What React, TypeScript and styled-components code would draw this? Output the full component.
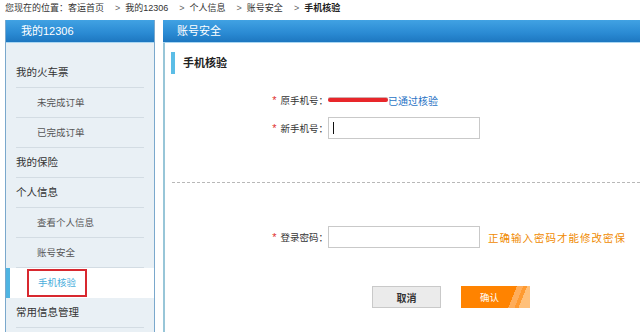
import styled, { createGlobalStyle } from 'styled-components'

const Global = createGlobalStyle`
  html, body {
    margin: 0;
    padding: 0;
    background: #fff;
    overflow: hidden;
  }
  body {
    font-family: 'Liberation Sans', 'Noto Sans CJK SC', sans-serif;
    color: #333;
  }
`

const crumbs = ['我的12306', '个人信息', '账号安全']

type NavItem = { text: string; sub?: boolean; active?: boolean }

const nav: NavItem[] = [
  { text: '我的火车票' },
  { text: '未完成订单', sub: true },
  { text: '已完成订单', sub: true },
  { text: '我的保险' },
  { text: '个人信息' },
  { text: '查看个人信息', sub: true },
  { text: '账号安全', sub: true },
  { text: '手机核验', sub: true, active: true },
  { text: '常用信息管理' },
]

function App() {
  return (
    <Page>
      <Global />
      <Crumbs>
        <span>您现在的位置：客运首页</span>
        {crumbs.map((c) => (
          <Crumb key={c}>
            <Arrow>&gt;</Arrow>
            {c}
          </Crumb>
        ))}
        <Crumb>
          <Arrow>&gt;</Arrow>
          <b>手机核验</b>
        </Crumb>
      </Crumbs>
      <Layout>
        <Sidebar>
          <PanelHead $pad={15}>我的12306</PanelHead>
          <SideBody>
            {nav.map((n) =>
              n.active ? (
                <ActiveRow key={n.text}>
                  <Marked>{n.text}</Marked>
                </ActiveRow>
              ) : (
                <NavRow key={n.text} $sub={n.sub}>
                  {n.text}
                </NavRow>
              )
            )}
          </SideBody>
        </Sidebar>
        <Main>
          <PanelHead $pad={14}>账号安全</PanelHead>
          <MainBody>
            <Title>手机核验</Title>
            <Row $top={15}>
              <Label>
                <Star>*</Star>原手机号：
              </Label>
              <Masked />
              <Verified>已通过核验</Verified>
            </Row>
            <Row $top={6}>
              <Label>
                <Star>*</Star>新手机号：
              </Label>
              <Field>
                <Caret />
              </Field>
            </Row>
            <Divider />
            <Row $top={43}>
              <Label>
                <Star>*</Star>登录密码：
              </Label>
              <Field />
              <Hint>正确输入密码才能修改密保</Hint>
            </Row>
            <Buttons>
              <Cancel>取消</Cancel>
              <Confirm>确认</Confirm>
            </Buttons>
          </MainBody>
        </Main>
      </Layout>
    </Page>
  )
}

const Page = styled.div`
  height: 332px;
  overflow: hidden;
`

const Crumbs = styled.div`
  display: flex;
  align-items: center;
  height: 14px;
  padding-left: 5px;
  font-size: 9px;
  color: #333;
  white-space: nowrap;
`

const Crumb = styled.span`
  margin-left: 11px;
  b {
    font-weight: bold;
    color: #222;
  }
`

const Arrow = styled.span`
  margin-right: 5px;
  color: #666;
`

const Layout = styled.div`
  display: flex;
  gap: 8px;
  padding: 6px 0 0 5px;
`

const Sidebar = styled.div`
  width: 150px;
  flex: none;
  box-sizing: border-box;
  border: 1px solid #7aa8cc;
  border-top: none;
  min-height: 330px;
  background: #e9f0f5;
`

const PanelHead = styled.div<{ $pad: number }>`
  height: 23px;
  line-height: 22px;
  padding-left: ${(p) => p.$pad}px;
  color: #fff;
  font-size: 11px;
  background: linear-gradient(#41a2e3, #2a8ad3 60%, #1d77c0);
  border-bottom: 1px solid #a9d6f2;
  box-sizing: border-box;
`

const SideBody = styled.div`
  padding-top: 15px;
`

const NavRow = styled.div<{ $sub?: boolean }>`
  height: 30px;
  line-height: 29px;
  margin: 0 10px;
  padding-left: ${(p) => (p.$sub ? 21 : 0)}px;
  border-bottom: 1px solid #d3dce3;
  box-sizing: border-box;
  font-size: ${(p) => (p.$sub ? 9.5 : 10.5)}px;
  color: ${(p) => (p.$sub ? '#555' : '#333')};
`

const ActiveRow = styled.div`
  display: flex;
  align-items: center;
  height: 30px;
  background: #fff;
  border-left: 4px solid #4eb4e2;
`

const Marked = styled.span`
  margin-left: 17px;
  height: 28px;
  line-height: 24px;
  padding: 0 9px;
  border: 2px solid #d8282f;
  box-sizing: border-box;
  font-size: 9.5px;
  color: #4aaedc;
`

const Main = styled.div`
  flex: 1;
  display: flex;
  flex-direction: column;
`

const MainBody = styled.div`
  border-left: 2px solid #98c6d8;
  min-height: 300px;
  background: #fff;
`

const Title = styled.div`
  margin: 9px 0 0 6px;
  height: 22px;
  line-height: 22px;
  border-left: 4px solid #5bbde6;
  padding-left: 8px;
  font-size: 11px;
  font-weight: bold;
  color: #222;
`

const Row = styled.div<{ $top: number }>`
  display: flex;
  align-items: center;
  height: 22px;
  margin-top: ${(p) => p.$top}px;
`

const Label = styled.span`
  width: 58px;
  margin-left: 105px;
  text-align: right;
  font-size: 9.5px;
  color: #333;
  white-space: nowrap;
`

const Star = styled.span`
  color: #e03030;
  font-size: 11px;
  margin-right: 4px;
`

const Masked = styled.span`
  width: 60px;
  height: 4px;
  border-radius: 2px;
  background: #e8262a;
  box-shadow: 0 -1px 0 rgba(120, 20, 20, 0.35);
`

const Verified = styled.span`
  font-size: 10px;
  color: #2a73c4;
`

const Field = styled.div`
  display: flex;
  align-items: center;
  width: 152px;
  height: 22px;
  padding-left: 4px;
  box-sizing: border-box;
  border: 1px solid #c9c9c9;
  background: #fff;
`

const Caret = styled.span`
  width: 1px;
  height: 12px;
  background: #111;
`

const Hint = styled.span`
  margin-left: 8px;
  font-size: 10.5px;
  letter-spacing: 1px;
  color: #f08a00;
`

const Divider = styled.div`
  margin: 43px 0 0 7px;
  border-top: 1px dashed #b8b8b8;
`

const Buttons = styled.div`
  display: flex;
  gap: 20px;
  margin: 38px 0 0 207px;
`

const Cancel = styled.button`
  width: 69px;
  height: 22px;
  padding: 0;
  border: 1px solid #c9c9c9;
  background: #ebebeb;
  font-family: inherit;
  font-size: 10px;
  font-weight: bold;
  color: #333;
`

const Confirm = styled.button`
  width: 69px;
  height: 22px;
  padding: 0 12px 0 0;
  border: none;
  background: linear-gradient(
    112deg,
    #ff8300 0,
    #ff8300 72%,
    #ffad5a 72%,
    #ffad5a 80%,
    #ff9a30 80%,
    #ff9a30 85%,
    #ffc07a 85%,
    #ffc07a 100%
  );
  font-family: inherit;
  font-size: 9.5px;
  color: #fff;
`

export default App
